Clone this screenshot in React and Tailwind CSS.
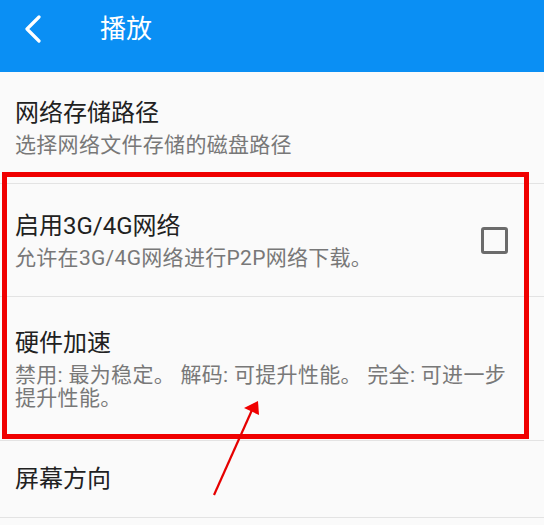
import React from 'react';

const rows = [
  { title: '网络存储路径', desc: '选择网络文件存储的磁盘路径', h: 'h-[112px]' },
  { title: '启用3G/4G网络', desc: '允许在3G/4G网络进行P2P网络下载。', h: 'h-[113px]', checkbox: true },
  {
    title: '硬件加速',
    desc: '禁用: 最为稳定。 解码: 可提升性能。 完全: 可进一步提升性能。',
    h: 'h-[144px]',
  },
  { title: '屏幕方向', h: 'h-[77px]' },
];

const App = () => {
  return (
    <div
      className="relative w-[544px] h-[525px] overflow-hidden bg-[#fafafa]"
      style={{ fontFamily: "Roboto, 'Noto Sans CJK SC', sans-serif" }}
    >
      <div className="flex items-center h-[72px] pb-[14px] bg-[#0a8ff4] text-white">
        <svg width="20" height="28" viewBox="0 0 20 28" className="ml-[23px]">
          <polyline
            points="16,2 4,14 16,26"
            fill="none"
            stroke="white"
            strokeWidth="3.2"
            strokeLinecap="round"
            strokeLinejoin="round"
          />
        </svg>
        <h1 className="ml-[57px] text-[26px] leading-none">播放</h1>
      </div>

      {rows.map((row, i) => (
        <div key={i} className={`flex items-center ${row.h} border-b border-[#e3e3e3] pl-[15px] pr-[30px]`}>
          <div className="flex-1">
            <div className={`text-[24px] leading-[30px] text-[#212121] ${row.desc ? 'mb-[6px]' : ''}`}>{row.title}</div>
            {row.desc && (
              <div className="text-[21px] leading-[23px] text-[#787878] tracking-[0.3px]">{row.desc}</div>
            )}
          </div>
          {row.checkbox && (
            <div className="w-[27px] h-[27px] border-[3px] border-[#6b6b6b] rounded-[3px] ml-4 mr-[6px]" />
          )}
        </div>
      ))}

      {/* annotation box */}
      <div className="absolute left-[2px] top-[172px] w-[527px] h-[267px] border-[5px] border-[#f00000]" />

      {/* annotation arrow */}
      <svg className="absolute left-0 top-0" width="544" height="525">
        <line x1="214" y1="495" x2="252" y2="410" stroke="#e60000" strokeWidth="2.2" />
        <polygon points="258,401 244,408 259,415" fill="#f00000" />
      </svg>
    </div>
  );
};

export default App;
